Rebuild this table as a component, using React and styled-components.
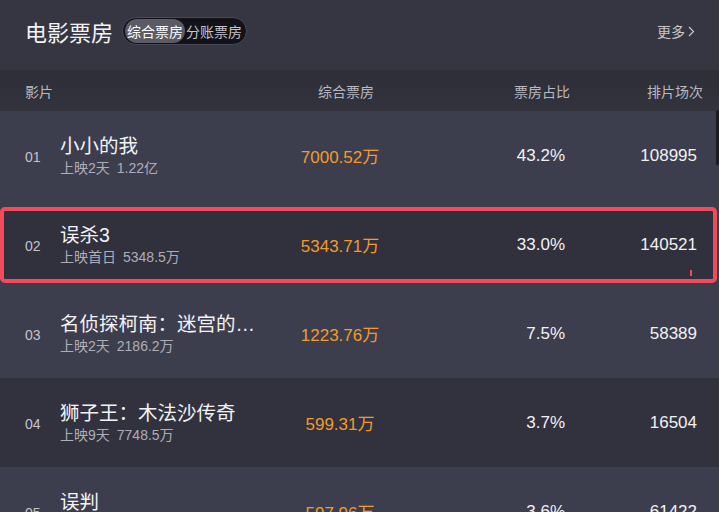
import React from "react";
import styled, { createGlobalStyle } from "styled-components";

const GlobalStyle = createGlobalStyle`
  body {
    margin: 0;
    background: #3d3e4c;
    font-family: "Liberation Sans", "Noto Sans CJK SC", sans-serif;
    overflow: hidden;
  }
`;

const movies = [
    { rank: "01", name: "小小的我", days: "上映2天", total: "1.22亿", box: "7000.52万", pct: "43.2%", shows: "108995" },
    { rank: "02", name: "误杀3", days: "上映首日", total: "5348.5万", box: "5343.71万", pct: "33.0%", shows: "140521", marked: true },
    { rank: "03", name: "名侦探柯南：迷宫的…", days: "上映2天", total: "2186.2万", box: "1223.76万", pct: "7.5%", shows: "58389" },
    { rank: "04", name: "狮子王：木法沙传奇", days: "上映9天", total: "7748.5万", box: "599.31万", pct: "3.7%", shows: "16504" },
    { rank: "05", name: "误判", days: "上映2天", total: "1102.6万", box: "597.96万", pct: "3.6%", shows: "61422" },
];

function App() {
    return (
        <Page>
            <GlobalStyle />
            <Header>
                <TitleGroup>
                    <Title>电影票房</Title>
                    <Toggle>
                        <ToggleItem $active>综合票房</ToggleItem>
                        <ToggleItem>分账票房</ToggleItem>
                    </Toggle>
                </TitleGroup>
                <More>
                    更多
                    <svg width="7" height="11" viewBox="0 0 7 11">
                        <path d="M1 1l4.5 4.5L1 10" fill="none" stroke="#c8c8d0" strokeWidth="1.2" />
                    </svg>
                </More>
            </Header>
            <ColumnHead>
                <HeadCell>影片</HeadCell>
                <HeadCell />
                <HeadCell $align="center" $shift="-12px">综合票房</HeadCell>
                <HeadCell $align="right" $shift="-5px">票房占比</HeadCell>
                <HeadCell $align="right" $shift="-6px">排片场次</HeadCell>
            </ColumnHead>
            <List>
                {movies.map((m, i) => (
                    <Row key={m.rank} $dark={i % 2 === 1 && !m.marked}>
                        {m.marked && <Highlight />}
                        {m.marked && <Tick />}
                        <Rank>{m.rank}</Rank>
                        <Info>
                            <Name>{m.name}</Name>
                            <Sub>
                                <span>{m.days}</span>
                                <span>{m.total}</span>
                            </Sub>
                        </Info>
                        <Box>{m.box}</Box>
                        <Num>{m.pct}</Num>
                        <Num>{m.shows}</Num>
                    </Row>
                ))}
            </List>
            <Scroll />
        </Page>
    );
}

const Page = styled.div`
    position: relative;
    width: 719px;
    height: 512px;
    overflow: hidden;
    background: #3d3e4c;
`;

const Header = styled.div`
    height: 70px;
    display: flex;
    align-items: center;
    justify-content: space-between;
    padding: 0 24px 8px 25px;
    box-sizing: border-box;
    background: #363642;
`;

const TitleGroup = styled.div`
    display: flex;
    align-items: center;
    gap: 9px;
`;

const Title = styled.h1`
    margin: 0;
    font-family: "Noto Sans CJK SC", sans-serif;
    font-size: 22px;
    font-weight: 400;
    color: #f4f4f6;
`;

const Toggle = styled.div`
    display: flex;
    align-items: center;
    height: 28px;
    padding: 0 3px 0 2px;
    box-sizing: border-box;
    border-radius: 14px;
    background: #121218;
    border: 1px solid #4a4a55;
`;

const ToggleItem = styled.span`
    height: 24px;
    line-height: 24px;
    padding: 0 ${(p) => (p.$active ? "2px" : "1px")};
    border-radius: 12px;
    font-family: "Noto Sans CJK SC", sans-serif;
    font-size: 14px;
    color: ${(p) => (p.$active ? "#ffffff" : "#c4c4ca")};
    background: ${(p) => (p.$active ? "#5b5b67" : "transparent")};
`;

const More = styled.div`
    display: flex;
    align-items: center;
    gap: 3px;
    font-family: "Noto Sans CJK SC", sans-serif;
    font-size: 14px;
    color: #c8c8d0;
`;

const grid = `
    display: grid;
    grid-template-columns: 35px 230px 100px 175px 132px;
    padding: 0 22px 0 25px;
    align-items: center;
`;

const ColumnHead = styled.div`
    ${grid}
    height: 41px;
    background: linear-gradient(#2e2e38, #33333e);
`;

const HeadCell = styled.div`
    font-family: "Noto Sans CJK SC", sans-serif;
    font-size: 14px;
    color: #b9b9c2;
    white-space: nowrap;
    text-align: ${(p) => p.$align || "left"};
    margin-right: ${(p) => p.$shift || "0"};
`;

const List = styled.div`
    display: flex;
    flex-direction: column;
`;

const Row = styled.div`
    ${grid}
    position: relative;
    height: 89px;
    background: ${(p) => (p.$dark ? "#31323e" : "#3d3e4d")};

    & > * {
        position: relative;
        z-index: 1;
    }
`;

const Highlight = styled.div`
    &&& {
        position: absolute;
        z-index: 0;
        top: 7px;
        bottom: 6px;
        left: 0;
        right: 2px;
        background: #30313d;
        border: 4px solid #f24b5c;
        border-radius: 5px;
    }
`;

const Tick = styled.div`
    &&& {
        position: absolute;
        left: 690px;
        top: 70px;
        width: 2px;
        height: 6px;
        background: #f24b5c;
    }
`;

const Rank = styled.div`
    font-size: 14px;
    color: #c4c4cc;
    padding-top: 2px;
`;

const Info = styled.div`
    display: flex;
    flex-direction: column;
    gap: 1px;
`;

const Name = styled.div`
    font-family: "Liberation Sans", "Noto Sans CJK SC", sans-serif;
    font-size: 19.5px;
    line-height: 24px;
    color: #f3f3f5;
    white-space: nowrap;
`;

const Sub = styled.div`
    display: flex;
    gap: 7px;
    font-family: "Liberation Sans", "Noto Sans CJK SC", sans-serif;
    font-size: 14px;
    line-height: 18px;
    color: #aeaeb8;
`;

const Box = styled.div`
    text-align: center;
    font-size: 17px;
    color: #f39a2b;
    white-space: nowrap;
`;

const Num = styled.div`
    text-align: right;
    font-size: 17px;
    color: #f1f1f4;
`;

const Scroll = styled.div`
    position: absolute;
    right: 0;
    top: 110px;
    width: 3px;
    height: 55px;
    background: #1c1c22;
    border-radius: 2px;
`;

export default App;
